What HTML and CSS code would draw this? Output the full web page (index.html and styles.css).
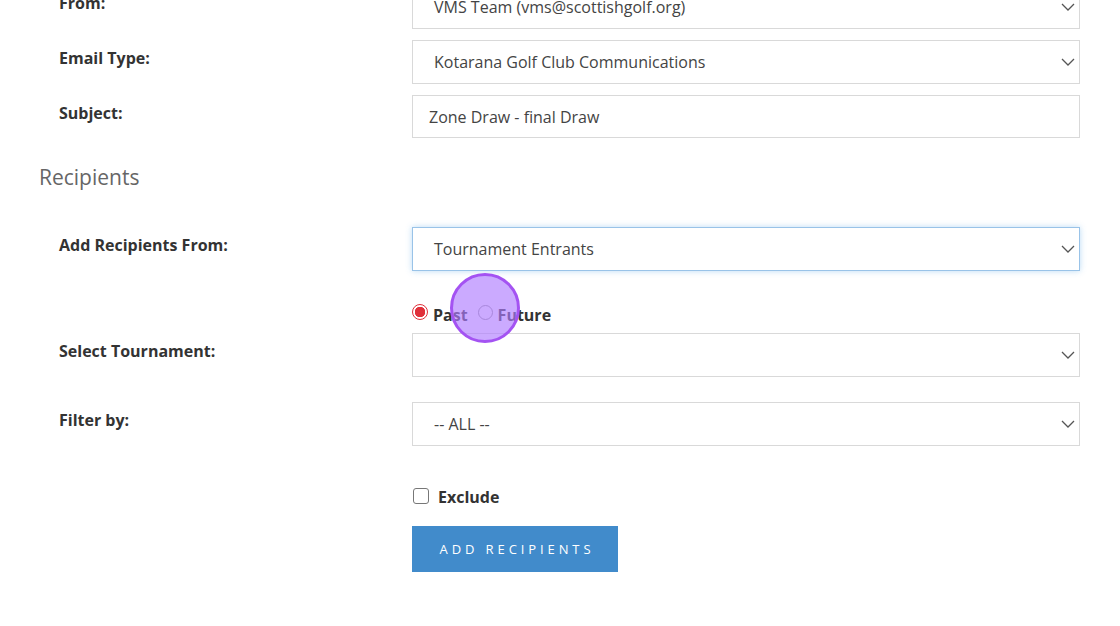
FILE: index.html
```html
<!DOCTYPE html>
<html>
<head>
<meta charset="utf-8">
<link rel="stylesheet" href="styles.css">
</head>
<body>
<div class="page">
  <div class="row first">
    <div class="label">From:</div>
    <div class="control">
      <div class="select"><span>VMS Team (vms@scottishgolf.org)</span><svg class="chev" width="14" height="8" viewBox="0 0 14 8"><path d="M1 1l6 6 6-6" fill="none" stroke="#555" stroke-width="1.3"/></svg></div>
    </div>
  </div>
  <div class="row">
    <div class="label">Email Type:</div>
    <div class="control">
      <div class="select"><span>Kotarana Golf Club Communications</span><svg class="chev" width="14" height="8" viewBox="0 0 14 8"><path d="M1 1l6 6 6-6" fill="none" stroke="#555" stroke-width="1.3"/></svg></div>
    </div>
  </div>
  <div class="row">
    <div class="label">Subject:</div>
    <div class="control">
      <div class="input">Zone Draw - final Draw</div>
    </div>
  </div>

  <h2 class="section">Recipients</h2>

  <div class="row">
    <div class="label">Add Recipients From:</div>
    <div class="control">
      <div class="select focus"><span>Tournament Entrants</span><svg class="chev" width="14" height="8" viewBox="0 0 14 8"><path d="M1 1l6 6 6-6" fill="none" stroke="#555" stroke-width="1.3"/></svg></div>
    </div>
  </div>
  <div class="row radios-row">
    <div class="label"></div>
    <div class="control radios">
      <span class="radio checked"></span><span class="rlabel">Past</span>
      <span class="radio"></span><span class="rlabel">Future</span>
      <span class="cursor"></span>
    </div>
  </div>
  <div class="row tight">
    <div class="label">Select Tournament:</div>
    <div class="control">
      <div class="select"><span></span><svg class="chev" width="14" height="8" viewBox="0 0 14 8"><path d="M1 1l6 6 6-6" fill="none" stroke="#555" stroke-width="1.3"/></svg></div>
    </div>
  </div>
  <div class="row filter">
    <div class="label">Filter by:</div>
    <div class="control">
      <div class="select"><span>-- ALL --</span><svg class="chev" width="14" height="8" viewBox="0 0 14 8"><path d="M1 1l6 6 6-6" fill="none" stroke="#555" stroke-width="1.3"/></svg></div>
    </div>
  </div>
  <div class="row check-row">
    <div class="label"></div>
    <div class="control checks">
      <span class="checkbox"></span><span class="clabel">Exclude</span>
    </div>
  </div>
  <div class="row btn-row">
    <div class="label"></div>
    <div class="control">
      <button class="btn">ADD RECIPIENTS</button>
    </div>
  </div>
</div>
</body>
</html>
```
FILE: styles.css
```css
html, body {
  margin: 0;
  padding: 0;
  background: #fff;
}
body {
  font-family: "Open Sans", "Liberation Sans", sans-serif;
  color: #333;
  overflow: hidden;
}
.page {
  width: 1120px;
  padding-right: 40px;
  box-sizing: border-box;
}
.row {
  display: flex;
  padding-left: 59px;
  margin-top: 11px;
}
.row.first {
  margin-top: -15px;
}
.label {
  width: 353px;
  flex: none;
  font-weight: 700;
  font-size: 16px;
  line-height: 24px;
  padding-top: 6px;
  color: #333;
}
.control {
  flex: 1;
  position: relative;
}
.select, .input {
  height: 44px;
  box-sizing: border-box;
  border: 1px solid #d9d9d9;
  background: #fff;
  display: flex;
  align-items: center;
  font-size: 16px;
  color: #444;
}
.select {
  padding: 0 4px 0 21px;
  justify-content: space-between;
}
.select span {
  flex: 1;
}
.input {
  padding-left: 16px;
  height: 43px;
}
.select.focus {
  border-color: #99c3e8;
  box-shadow: 0 0 6px rgba(102, 175, 233, 0.45);
}
.chev {
  flex: none;
}
.section {
  margin: 24px 0 0 39px;
  font-size: 21px;
  font-weight: 400;
  color: #666;
  line-height: 30px;
  height: 30px;
}
.section + .row {
  margin-top: 35px;
}
.radios-row {
  margin-top: 32px;
  height: 30px;
}
.radios {
  display: flex;
  align-items: flex-start;
  height: 30px;
}
.radio {
  width: 15px;
  height: 15px;
  border-radius: 50%;
  border: 1px solid #999;
  box-sizing: border-box;
  background: #fff;
  margin-top: 2px;
  flex: none;
}
.radio.checked {
  width: 16px;
  height: 16px;
  margin-top: 1px;
  border: 1.5px solid #e0303a;
  background: radial-gradient(circle, #e0303a 0 5px, #fff 5.5px);
  margin-left: 0;
}
.rlabel {
  font-weight: 700;
  font-size: 16px;
  margin-left: 5px;
  margin-right: 10px;
  line-height: 22px;
  padding-top: 1px;
}
.cursor {
  position: absolute;
  left: 38px;
  top: -30px;
  width: 70px;
  height: 70px;
  border-radius: 50%;
  box-sizing: border-box;
  border: 3px solid #a453f2;
  background: rgba(175, 125, 255, 0.65);
  z-index: 5;
}
.row.tight {
  margin-top: 0;
}
.row.filter {
  margin-top: 25px;
}
.check-row {
  margin-top: 38px;
}
.checks {
  display: flex;
  align-items: center;
  height: 24px;
}
.checkbox {
  width: 16px;
  height: 16px;
  box-sizing: border-box;
  border: 1.5px solid #777;
  border-radius: 3px;
  margin-left: 1px;
  flex: none;
}
.clabel {
  font-weight: 700;
  font-size: 16px;
  margin-left: 9px;
  padding-top: 1px;
}
.btn-row {
  margin-top: 18px;
}
.btn {
  display: block;
  width: 206px;
  height: 46px;
  border: none;
  background: #418bcb;
  color: #fff;
  font-family: "Open Sans", "Liberation Sans", sans-serif;
  font-size: 13px;
  letter-spacing: 3.9px;
  padding: 0 0 0 4px;
  margin: 0;
  cursor: pointer;
}
```
